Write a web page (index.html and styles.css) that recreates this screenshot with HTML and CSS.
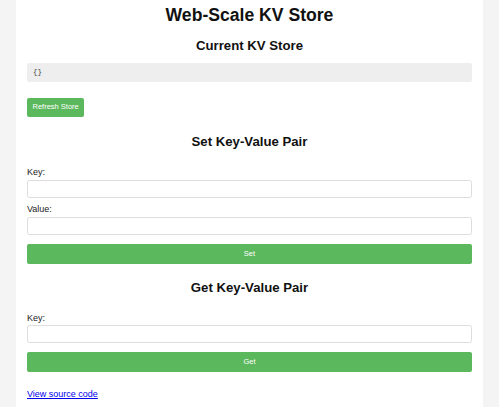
FILE: index.html
```html
<!DOCTYPE html>
<html lang="en">
<head>
  <meta charset="UTF-8">
  <meta name="viewport" content="width=device-width, initial-scale=1.0">
  <title>Web-Scale KV Store</title>
  <link rel="stylesheet" href="styles.css">
</head>
<body>
  <div class="container">
    <h1>Web-Scale KV Store</h1>

    <section class="store-section">
      <h2>Current KV Store</h2>
      <pre id="storeView" class="store-view">{}</pre>
      <button id="refreshBtn" class="btn">Refresh Store</button>
    </section>

    <section class="kv-section">
      <h2>Set Key-Value Pair</h2>
      <form id="setForm">
        <label for="setKey">Key:</label>
        <input type="text" id="setKey" name="key">
        <label for="setValue" class="label-next">Value:</label>
        <input type="text" id="setValue" name="value">
        <button type="submit" class="btn btn-full">Set</button>
      </form>
    </section>

    <section class="kv-section">
      <h2>Get Key-Value Pair</h2>
      <form id="getForm">
        <label for="getKey">Key:</label>
        <input type="text" id="getKey" name="key">
        <button type="submit" class="btn btn-full">Get</button>
      </form>
    </section>

    <a href="#" class="source-link">View source code</a>
  </div>

  <script>
    const store = {};

    function showStore() {
      document.getElementById('storeView').textContent = JSON.stringify(store, null, 2);
    }

    document.getElementById('refreshBtn').addEventListener('click', showStore);

    document.getElementById('setForm').addEventListener('submit', function(e) {
      e.preventDefault();
      const key = document.getElementById('setKey').value;
      if (!key) return;
      store[key] = document.getElementById('setValue').value;
      this.reset();
      showStore();
    });

    document.getElementById('getForm').addEventListener('submit', function(e) {
      e.preventDefault();
      const key = document.getElementById('getKey').value;
      alert(key in store ? store[key] : 'Key not found');
    });
  </script>
</body>
</html>
```

FILE: styles.css
```css
body {
  font-family: "Liberation Sans", Arial, sans-serif;
  font-size: 9px;
  background-color: #f4f4f4;
  color: #333;
  margin: 0;
  padding: 0 16px;
}
.container {
  background: #fff;
  width: 467px;
  min-height: 100vh;
  box-sizing: border-box;
  padding: 5px 11px 20px;
}
h1 {
  font-size: 17.6px;
  line-height: 20px;
  text-align: center;
  color: #111;
  margin: 0;
}
h2 {
  font-size: 13.2px;
  line-height: 16px;
  text-align: center;
  color: #111;
  margin: 0;
}
.store-section h2 {
  margin-top: 12.6px;
}
.store-view {
  background: #eee;
  border-radius: 2px;
  font-family: "Liberation Mono", monospace;
  font-size: 7.4px;
  line-height: 8px;
  padding: 5.5px 6px;
  margin: 9.4px 0 0;
  color: #444;
}
.kv-section h2 {
  margin-top: 17px;
  margin-bottom: 17px;
}
.kv-section + .kv-section h2 {
  margin-top: 16.5px;
  margin-bottom: 16.6px;
}
label {
  display: block;
  line-height: 10px;
  color: #222;
}
.label-next {
  margin-top: 6.6px;
}
input {
  display: block;
  width: 100%;
  height: 18px;
  box-sizing: border-box;
  margin-top: 2.4px;
  padding: 0 4px;
  border: 1px solid #ddd;
  border-radius: 2.5px;
  font: inherit;
}
.btn {
  display: block;
  background-color: #5cb85c;
  color: #fff;
  border: none;
  border-radius: 2px;
  font-family: "Liberation Sans", Arial, sans-serif;
  font-size: 7.5px;
  line-height: 8.5px;
  padding: 5.5px;
  cursor: pointer;
}
.store-section .btn {
  margin-top: 16px;
}
.btn-full {
  width: 100%;
  margin-top: 9.2px;
}
.btn:hover {
  background-color: #4cae4c;
}
.source-link {
  display: inline-block;
  margin-top: 17.6px;
  line-height: 10px;
  color: #0000ee;
}
```
